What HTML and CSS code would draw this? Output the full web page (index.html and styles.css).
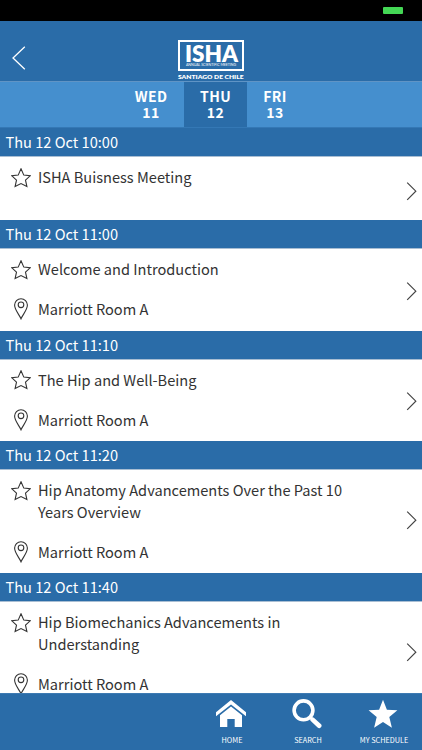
FILE: index.html
```
<!DOCTYPE html>
<html lang="en">
	<head>
		<meta charset="utf-8" />
		<title>ISHA Schedule</title>
		<link rel="stylesheet" href="styles.css">
	</head>
	<body>
		<!-- shared icons -->
		<svg class="defs" width="0" height="0">
			<symbol id="star" viewBox="0 0 20 20">
				<path d="M10 .8 L12.8 7.1 L19.1 7.8 L14.5 12.2 L15.9 18.6 L10 15.6 L4.1 18.6 L5.5 12.2 L.9 7.8 L7.2 7.1 Z" />
			</symbol>
			<symbol id="pin" viewBox="0 0 20 22">
				<path d="M10 20.8 C8.3 16.6 3.6 12 3.6 7.1 A6.4 6.4 0 0 1 16.4 7.1 C16.4 12 11.7 16.6 10 20.8 Z" />
				<circle cx="10" cy="6.8" r="2.8" />
			</symbol>
			<symbol id="next" viewBox="0 0 11 20">
				<path d="M1.2 1.6 L9.8 10.2 L1.2 18.8" />
			</symbol>
		</svg>

		<div class="app">
			<div class="statusbar"><span class="battery"></span></div>

			<header class="header">
				<svg class="back" viewBox="0 0 14 24"><path d="M12.8 .8 L1 12 L12.8 23.2" /></svg>
				<div class="logo">
					<div class="logo-box">
						<svg width="66" height="31" viewBox="0 0 66 31">
							<rect x="1" y="1" width="64" height="29" />
							<text class="logo-name" x="7" y="21.5" textLength="53" lengthAdjust="spacingAndGlyphs">ISHA</text>
							<text class="logo-sub" x="8" y="26" textLength="50" lengthAdjust="spacingAndGlyphs">ANNUAL SCIENTIFIC MEETING</text>
						</svg>
					</div>
					<svg class="logo-city" width="66" height="9" viewBox="0 0 66 9">
						<text x="0" y="6.7" textLength="65.5" lengthAdjust="spacingAndGlyphs">SANTIAGO DE CHILE</text>
					</svg>
				</div>
			</header>

			<nav class="days">
				<div class="day">WED<br>11</div>
				<div class="day active">THU<br>12</div>
				<div class="day">FRI<br>13</div>
			</nav>

			<main class="list">
				<h2 class="time">Thu 12 Oct 10:00</h2>
				<div class="session short">
					<div class="info">
						<div class="line"><svg class="icon star"><use href="#star" /></svg><p>ISHA Buisness Meeting</p></div>
					</div>
					<svg class="next"><use href="#next" /></svg>
				</div>

				<h2 class="time">Thu 12 Oct 11:00</h2>
				<div class="session">
					<div class="info">
						<div class="line"><svg class="icon star"><use href="#star" /></svg><p>Welcome and Introduction</p></div>
						<div class="line"><svg class="icon pin"><use href="#pin" /></svg><p>Marriott Room A</p></div>
					</div>
					<svg class="next"><use href="#next" /></svg>
				</div>

				<h2 class="time">Thu 12 Oct 11:10</h2>
				<div class="session">
					<div class="info">
						<div class="line"><svg class="icon star"><use href="#star" /></svg><p>The Hip and Well-Being</p></div>
						<div class="line"><svg class="icon pin"><use href="#pin" /></svg><p>Marriott Room A</p></div>
					</div>
					<svg class="next"><use href="#next" /></svg>
				</div>

				<h2 class="time">Thu 12 Oct 11:20</h2>
				<div class="session tall">
					<div class="info">
						<div class="line"><svg class="icon star"><use href="#star" /></svg><p>Hip Anatomy Advancements Over the Past 10<br>Years Overview</p></div>
						<div class="line"><svg class="icon pin"><use href="#pin" /></svg><p>Marriott Room A</p></div>
					</div>
					<svg class="next"><use href="#next" /></svg>
				</div>

				<h2 class="time">Thu 12 Oct 11:40</h2>
				<div class="session tall">
					<div class="info">
						<div class="line"><svg class="icon star"><use href="#star" /></svg><p>Hip Biomechanics Advancements in<br>Understanding</p></div>
						<div class="line"><svg class="icon pin"><use href="#pin" /></svg><p>Marriott Room A</p></div>
					</div>
					<svg class="next"><use href="#next" /></svg>
				</div>
			</main>

			<footer class="tabbar">
				<div class="tab">
					<svg viewBox="0 0 30 30">
						<path d="M15 1 L30 13.2 V17.2 L15 5.4 L0 17.2 V13.2 Z" />
						<path d="M15 7.6 L26 16.2 V28 H18.7 V20 H11.3 V28 H4 V16.2 Z" />
					</svg>
					<span>HOME</span>
				</div>
				<div class="tab">
					<svg viewBox="0 0 30 30">
						<circle class="lens" cx="11.5" cy="11.3" r="9.4" />
						<path class="handle" d="M20.6 20.6 L27.2 26.8" />
						<path class="neck" d="M18 17.8 L21 20.8" />
					</svg>
					<span>SEARCH</span>
				</div>
				<div class="tab">
					<svg viewBox="0 0 30 30">
						<path d="M15 .8 L18.9 10.7 L29.4 11.3 L21.3 18 L23.9 28.8 L15 22.9 L6.1 28.8 L8.7 18 L.6 11.3 L11.1 10.7 Z" />
					</svg>
					<span>MY SCHEDULE</span>
				</div>
			</footer>
		</div>
	</body>
</html>
```
FILE: styles.css
```
* {
	box-sizing: border-box;
	margin: 0;
	padding: 0;
}
body {
	font-family: "Noto Sans CJK SC", "Noto Sans", sans-serif;
	background-color: #fff;
	color: #333;
}
.defs {
	display: none;
}
.app {
	display: flex;
	flex-direction: column;
	height: 750px;
	overflow: hidden;
}

/** status bar **/
.statusbar {
	flex: none;
	height: 21px;
	padding: 7px 19px 0 0;
	background-color: #000;
}
.battery {
	display: block;
	width: 20px;
	height: 7px;
	margin-left: auto;
	border-radius: 1px;
	background-color: #44d755;
}

/** header **/
.header {
	flex: none;
	display: grid;
	grid-template-columns: 1fr 66px 1fr;
	height: 61px;
	background-color: #2a6ca8;
	border-bottom: 1px solid #6094c5;
}
.back {
	width: 14px;
	height: 24px;
	margin: 25px 0 0 12px;
	fill: none;
	stroke: #fff;
	stroke-width: 1.3;
}
.logo {
	padding-top: 19px;
}
.logo svg {
	display: block;
	fill: #fff;
	font-family: Lato, sans-serif;
	font-weight: bold;
}
.logo rect {
	fill: none;
	stroke: #fff;
	stroke-width: 2;
}
.logo .logo-name {
	font-size: 22px;
	font-weight: 800;
}
.logo-sub {
	font-size: 3.6px;
	font-weight: normal;
}
.logo .logo-city {
	margin-top: 1px;
	overflow: visible;
	font-size: 6.4px;
	font-weight: 800;
}

/** day switch **/
.days {
	flex: none;
	display: grid;
	grid-template-columns: 66px 63px 56px;
	padding-left: 118px;
	height: 46px;
	background-color: #458fce;
	border-bottom: 1px solid #3478b5;
}
.day {
	padding-top: 6px;
	color: #fff;
	font-size: 14px;
	font-weight: bold;
	line-height: 16px;
	letter-spacing: .4px;
	text-align: center;
}
.day.active {
	background-color: #2a6ca8;
}

/** sessions **/
.list {
	flex: 1;
	min-height: 0;
	overflow: hidden;
}
.time {
	height: 29px;
	padding-left: 5.5px;
	background-color: #2a6ca8;
	border-bottom: 1px solid #a9bed3;
	color: #fff;
	font-size: 14.6px;
	font-weight: normal;
	line-height: 27px;
}
.session {
	display: flex;
	height: 81.5px;
	padding: 10px 5.5px 0 11px;
}
.session.short {
	height: 63px;
}
.session.tall {
	height: 103px;
}
.info {
	flex: 1;
}
.line {
	display: flex;
	font-size: 14.6px;
	line-height: 21.5px;
}
.line + .line {
	margin-top: 19px;
}
.line p {
	margin-left: 7px;
	margin-top: -.7px;
	white-space: nowrap;
}
.icon {
	flex: none;
	width: 20px;
	height: 20px;
	fill: none;
	stroke: #333;
	stroke-width: 1.1;
}
.star {
	margin-top: .5px;
}
.pin {
	height: 22px;
	margin-top: -.5px;
}
.next {
	flex: none;
	align-self: center;
	width: 11px;
	height: 20px;
	margin-top: -8px;
	fill: none;
	stroke: #444;
	stroke-width: 1.2;
}
.short .next {
	margin-top: -5px;
}
.tall .next {
	margin-top: -13px;
}

/** bottom tabs **/
.tabbar {
	flex: none;
	display: flex;
	justify-content: flex-end;
	height: 57px;
	background-color: #2a6ca8;
	border-top: 1px solid #3d7ab2;
}
.tab {
	display: flex;
	flex-direction: column;
	align-items: center;
	width: 76px;
	padding-top: 5px;
	color: #fff;
	font-size: 7.3px;
	line-height: 12px;
	white-space: nowrap;
}
.tab svg {
	width: 30px;
	height: 30px;
	margin-left: -2px;
	fill: #fff;
}
.tab span {
	margin-top: 5px;
}
.tab .lens {
	fill: none;
	stroke: #fff;
	stroke-width: 3.6;
}
.tab .handle {
	stroke: #fff;
	stroke-width: 4.6;
	stroke-linecap: round;
}
.tab .neck {
	stroke: #fff;
	stroke-width: 2.4;
}
```
